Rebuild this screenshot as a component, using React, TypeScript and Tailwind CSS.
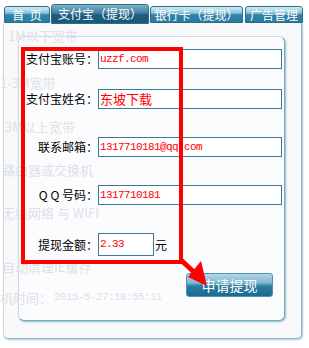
const tabBase =
  "flex items-center justify-center text-white text-[12px] leading-[14px] whitespace-nowrap rounded-t-[3px] border border-[#2b6e8c]";

const tabIdle =
  "h-[17px] mt-[2px] bg-[linear-gradient(#d4ebf4_0%,#8cc3da_40%,#2f84ab_52%,#2a7aa0_100%)]";

const tabActive =
  "h-[20px] border-[#1c4c63] bg-[linear-gradient(#7fb1c9_0%,#3f7fa0_45%,#1c5d7e_55%,#1a5877_100%)]";

type Row = {
  label: string;
  value: string;
  mono?: boolean;
  top: string;
};

const rows: Row[] = [
  { label: "支付宝账号：", value: "uzzf.com", mono: true, top: "mt-[12px]" },
  { label: "支付宝姓名：", value: "东坡下载", top: "mt-[20px]" },
  { label: "联系邮箱：", value: "1317710181@qq.com", mono: true, top: "mt-[28px]" },
  { label: "Q Q 号码：", value: "1317710181", mono: true, top: "mt-[28px]" },
];

const ghost = [
  { text: "1M以下宽带", cls: "left-[8px] top-[29px]" },
  { text: "1-3M宽带", cls: "left-[0px] top-[76px]" },
  { text: "3M以上宽带", cls: "left-[5px] top-[120px]" },
  { text: "路由器或交换机", cls: "left-[2px] top-[163px]" },
  { text: "无线网络 与 WIFI", cls: "left-[2px] top-[206px]" },
  { text: "自动清理IE缓存", cls: "left-[2px] top-[260px]" },
];

export default function App() {
  return (
    <div
      className="relative w-[309px] h-[348px] overflow-hidden bg-white"
      style={{ fontFamily: '"Noto Sans CJK SC", "Liberation Sans", sans-serif' }}
    >
      {/* tabs */}
      <div className="flex items-start gap-[1px] pl-[4px] pt-[4px] h-[20px]">
        <div className={`${tabBase} ${tabIdle} w-[46px]`}>首&nbsp;&nbsp;页</div>
        <div className={`${tabBase} ${tabActive} w-[98px]`}>支付宝（提现）</div>
        <div className={`${tabBase} ${tabIdle} w-[93px]`}>银行卡（提现）</div>
        <div className={`${tabBase} ${tabIdle} w-[58px] ml-[1px]`}>广告管理</div>
      </div>

      {/* outer panel */}
      <div className="ml-[3px] w-[299px] h-[319px] rounded-[5px] border border-[#cfd5da] border-r-[#6cc3da] border-b-[#6cc3da] bg-[#f7f9fb] shadow-[1px_1px_2px_rgba(0,0,0,0.25)] pt-[15px] pl-[14px]">
        {/* inner panel */}
        <div className="w-[267px] h-[285px] rounded-[6px] border border-[#d3d9de] border-r-[#58b9d3] border-b-[#58b9d3] bg-[#fbfcfe] shadow-[1px_1px_2px_rgba(0,0,0,0.3)] flex flex-col">
          {rows.map((r) => (
            <div key={r.label} className={`flex items-center ${r.top}`}>
              <div className="w-[79px] text-right text-[12px] leading-none text-black">
                {r.label}
              </div>
              <div
                className={`w-[184px] h-[20px] border border-[#3c7b97] bg-white flex items-center pl-[1px] text-[#ff0000] ${
                  r.mono ? "text-[11px] tracking-[-0.6px]" : "text-[13px]"
                }`}
                style={r.mono ? { fontFamily: '"Liberation Mono", monospace' } : undefined}
              >
                {r.value}
              </div>
            </div>
          ))}

          <div className="flex items-center mt-[28px]">
            <div className="w-[79px] text-right text-[12px] leading-none text-black">
              提现金额：
            </div>
            <div
              className="w-[56px] h-[23px] border border-[#3c7b97] bg-white flex items-center pl-[1px] text-[11px] tracking-[-0.6px] text-[#ff0000]"
              style={{ fontFamily: '"Liberation Mono", monospace' }}
            >
              2.33
            </div>
            <span className="text-[12px] text-black ml-[1px]">元</span>
          </div>

          <button className="ml-[167px] mt-[17px] w-[87px] h-[24px] rounded-[3px] border border-[#4f93b3] bg-[linear-gradient(#b3d7e6_0%,#7fb7cf_40%,#2a7ca2_55%,#1d6a8e_100%)] text-white text-[14px] leading-none flex items-center justify-center">
            申请提现
          </button>
        </div>
      </div>

      {/* ghost text showing through */}
      {ghost.map((g) => (
        <div
          key={g.text}
          className={`absolute ${g.cls} text-[13px] leading-none whitespace-nowrap text-[#dde1e5] pointer-events-none`}
        >
          {g.text}
        </div>
      ))}
      <div className="absolute left-[0px] top-[291px] flex items-center text-[13px] leading-none whitespace-nowrap text-[#dde1e5] pointer-events-none">
        <span>机时间：</span>
        <span
          className="ml-[2px] text-[11px] tracking-[-0.6px]"
          style={{ fontFamily: '"Liberation Mono", monospace' }}
        >
          2015-5-27:18:55:11
        </span>
      </div>

      {/* red annotation */}
      <div className="absolute left-[21px] top-[47px] w-[162px] h-[217px] border-4 border-[#ff0000] pointer-events-none" />
      <svg
        className="absolute left-0 top-0 pointer-events-none"
        width="309"
        height="348"
        viewBox="0 0 309 348"
      >
        <line x1="181" y1="260" x2="196" y2="274" stroke="#ff0000" strokeWidth="5" />
        <polygon points="201,261 188,277 207,286" fill="#ff0000" />
      </svg>
    </div>
  );
}
